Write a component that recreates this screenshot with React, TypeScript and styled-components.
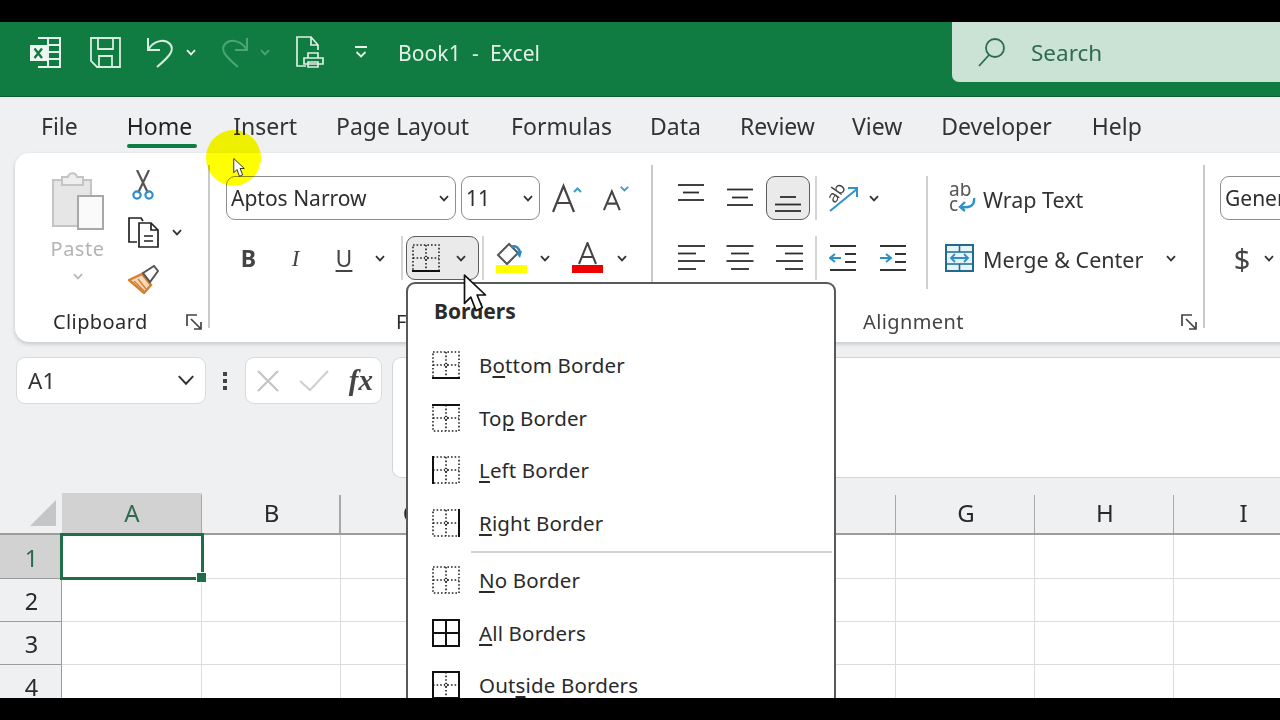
import React from "react";
import styled, { createGlobalStyle } from "styled-components";

const FONT = `"Noto Sans", "Open Sans", "Liberation Sans", sans-serif`;

const Global = createGlobalStyle`
  html, body { margin: 0; padding: 0; background: #000; }
  body { font-family: ${FONT}; width: 1280px; height: 720px; overflow: hidden; }
  #root { width: 1280px; height: 720px; padding: 22px 0; box-sizing: border-box; }
`;

const Frame = styled.div`
  position: relative;
  width: 1280px;
  height: 676px;
  overflow: hidden;
  background: #eef0f2;
  color: #2b2b2b;
`;

/* ---------- title bar ---------- */
const TitleBar = styled.header`
  display: flex;
  align-items: flex-start;
  height: 75px;
  background: #107c41;
  border-bottom: 1px solid #0c5f33;
  box-sizing: border-box;
`;
const Qat = styled.div`
  display: flex;
  align-items: center;
  height: 60px;
  flex: 1;
`;
const QatCell = styled.div<{ $w: number; $ml?: number }>`
  display: flex;
  align-items: center;
  justify-content: center;
  flex: none;
  width: ${(p) => p.$w}px;
  margin-left: ${(p) => p.$ml ?? 0}px;
`;
const DocTitle = styled.div`
  margin-left: 30px;
  padding-top: 2px;
  font-size: 21px;
  color: #e3f1e9;
  white-space: pre;
  letter-spacing: 0.1px;
`;
const SearchBox = styled.div`
  display: flex;
  align-items: center;
  gap: 25px;
  width: 328px;
  height: 60px;
  padding-left: 26px;
  box-sizing: border-box;
  background: #cbe3d5;
  border-bottom-left-radius: 7px;
  font-size: 22.5px;
  color: #2f6b4d;
`;

/* ---------- tabs ---------- */
const TabBar = styled.nav`
  display: flex;
  align-items: flex-start;
  height: 56px;
  padding-left: 41px;
  box-sizing: border-box;
`;
const Tab = styled.div<{ $ml: number; $active?: boolean }>`
  position: relative;
  margin-left: ${(p) => p.$ml}px;
  padding-top: 13px;
  font-size: 23px;
  line-height: 32px;
  color: ${(p) => (p.$active ? "#222" : "#333")};
  white-space: nowrap;
  &::after {
    content: "";
    display: ${(p) => (p.$active ? "block" : "none")};
    position: absolute;
    left: 0;
    right: -5px;
    top: 47px;
    height: 4px;
    border-radius: 2px;
    background: #107c41;
  }
`;

/* ---------- ribbon ---------- */
const Ribbon = styled.section`
  display: flex;
  align-items: flex-start;
  height: 189px;
  margin-left: 15px;
  margin-right: -30px;
  background: #fff;
  border-radius: 14px;
  box-shadow: 0 2px 4px rgba(0, 0, 0, 0.18);
  box-sizing: border-box;
`;
const Group = styled.div<{ $w: number; $last?: boolean }>`
  display: flex;
  flex-direction: column;
  flex: none;
  width: ${(p) => p.$w}px;
  height: 163px;
  margin-top: 12px;
  box-sizing: border-box;
  border-right: ${(p) => (p.$last ? "none" : "2px solid #cacaca")};
`;
const GroupBody = styled.div<{ $pl: number }>`
  display: flex;
  flex-direction: column;
  gap: 16px;
  padding: 11px 0 0 ${(p) => p.$pl}px;
`;
const ClipBody = styled.div`
  display: flex;
  padding: 7px 0 0 23px;
`;
const ToolRow = styled.div`
  display: flex;
  align-items: center;
  height: 44px;
`;
const Cell = styled.div<{ $w: number; $ml?: number }>`
  display: flex;
  align-items: center;
  justify-content: center;
  flex: none;
  width: ${(p) => p.$w}px;
  height: 44px;
  margin-left: ${(p) => p.$ml ?? 0}px;
`;
const Sep = styled.div<{ $ml: number; $mr?: number }>`
  flex: none;
  width: 2px;
  height: 44px;
  margin: 0 ${(p) => p.$mr ?? 0}px 0 ${(p) => p.$ml}px;
  background: #d4d4d4;
`;
const TallSep = styled.div`
  flex: none;
  width: 2px;
  height: 113px;
  background: #d0d0d0;
`;
const SelectBox = styled.div<{ $w: number; $ml?: number }>`
  display: flex;
  align-items: center;
  justify-content: space-between;
  flex: none;
  width: ${(p) => p.$w}px;
  height: 44px;
  margin-left: ${(p) => p.$ml ?? 0}px;
  padding: 0 6px 0 4px;
  box-sizing: border-box;
  border: 1.5px solid #8e8e8e;
  border-radius: 9px;
  font-size: 21px;
  color: #2e2e2e;
  overflow: hidden;
  white-space: nowrap;
`;
const PressedButton = styled.div<{ $w: number; $ml?: number; $gap?: number; $pl?: number }>`
  display: flex;
  align-items: center;
  justify-content: ${(p) => (p.$pl ? "flex-start" : "center")};
  gap: ${(p) => p.$gap ?? 0}px;
  flex: none;
  width: ${(p) => p.$w}px;
  height: 44px;
  margin-left: ${(p) => p.$ml ?? 0}px;
  padding-left: ${(p) => p.$pl ?? 0}px;
  box-sizing: border-box;
  background: #eaeaea;
  border: 1.5px solid #5c5c5c;
  border-radius: 9px;
`;
const StyleGlyph = styled.span<{ $bold?: boolean; $italic?: boolean; $under?: boolean }>`
  font-size: 23px;
  line-height: 1;
  color: #444;
  font-family: ${(p) => (p.$italic ? `"Liberation Serif", serif` : FONT)};
  font-weight: ${(p) => (p.$bold ? 700 : 400)};
  font-style: ${(p) => (p.$italic ? "italic" : "normal")};
  text-decoration: ${(p) => (p.$under ? "underline" : "none")};
  text-underline-offset: 3px;
`;
const CurrencyGlyph = styled.span`
  font-size: 29px;
  line-height: 1;
  color: #444;
`;
const LabelText = styled.div<{ $muted?: boolean }>`
  font-size: 20px;
  line-height: 20px;
  letter-spacing: 0.4px;
  color: ${(p) => (p.$muted ? "#444" : "#2b2b2b")};
`;
const LabelRow = styled.div<{ $pl: number; $pr: number }>`
  display: flex;
  align-items: center;
  justify-content: space-between;
  height: 20px;
  margin-top: auto;
  margin-bottom: -4px;
  padding: 0 ${(p) => p.$pr}px 0 ${(p) => p.$pl}px;
`;
const PasteColumn = styled.div`
  display: flex;
  flex-direction: column;
  align-items: center;
  flex: none;
  width: 80px;
`;
const PasteText = styled.div`
  margin: 6px 0 0 -1px;
  font-size: 20px;
  line-height: 26px;
  letter-spacing: 0.5px;
  color: #b4b4b4;
`;
const ChevronGap = styled.div`
  margin-top: 11px;
  line-height: 0;
`;
const ClipTools = styled.div`
  display: flex;
  flex-direction: column;
  flex: none;
  width: 80px;
  gap: 3px;
  margin-top: -9px;
`;
const ClipTool = styled.div`
  display: flex;
  align-items: center;
  height: 44px;
`;
const ClipIcon = styled.div`
  display: flex;
  justify-content: center;
  flex: none;
  width: 50px;
  margin-right: 4px;
`;
const RibbonLabelText = styled.span<{ $ml: number }>`
  margin-left: ${(p) => p.$ml}px;
  padding-top: 2px;
  font-size: 21.5px;
  color: #333;
  white-space: nowrap;
`;
const WideTool = styled.div<{ $pl: number }>`
  display: flex;
  align-items: center;
  height: 44px;
  padding-left: ${(p) => p.$pl}px;
`;
const WrapColumn = styled.div`
  display: flex;
  flex-direction: column;
  gap: 16px;
`;
const AlignBody = styled.div`
  display: flex;
  padding: 11px 0 0 13px;
`;
const AlignTools = styled.div`
  display: flex;
  flex-direction: column;
  gap: 16px;
  width: 260px;
`;
const CenteredChevron = styled.span<{ $ml: number }>`
  display: inline-flex;
  margin-left: ${(p) => p.$ml}px;
`;

/* ---------- formula row ---------- */
const FormulaRow = styled.section`
  display: flex;
  align-items: flex-start;
  height: 136px;
  padding: 15px 0 0 16px;
  box-sizing: border-box;
`;
const NameBox = styled.div`
  display: flex;
  align-items: center;
  justify-content: space-between;
  flex: none;
  width: 190px;
  height: 47px;
  padding: 0 10px 0 11px;
  box-sizing: border-box;
  background: #fff;
  border: 1.5px solid #dadada;
  border-radius: 9px;
  font-size: 22.5px;
  color: #333;
`;
const Dots = styled.div`
  display: flex;
  flex-direction: column;
  align-items: center;
  justify-content: center;
  gap: 3px;
  flex: none;
  width: 39px;
  height: 47px;
  padding-right: 1px;
  box-sizing: border-box;
`;
const Dot = styled.span`
  width: 4px;
  height: 4px;
  background: #444;
`;
const FxBox = styled.div`
  display: flex;
  align-items: center;
  justify-content: space-between;
  flex: none;
  width: 137px;
  height: 47px;
  padding: 0 8px 0 10px;
  box-sizing: border-box;
  background: #fff;
  border: 1.5px solid #dadada;
  border-radius: 9px;
`;
const FxText = styled.span`
  font-family: "Liberation Serif", serif;
  font-style: italic;
  font-weight: 700;
  font-size: 29px;
  line-height: 1;
  color: #444;
`;
const FormulaInput = styled.div`
  flex: 1;
  height: 121px;
  margin-left: 10px;
  background: #fff;
  border: 1.5px solid #d4d4d4;
  border-right: none;
  border-top-left-radius: 9px;
  border-bottom-left-radius: 9px;
  box-sizing: border-box;
`;

/* ---------- sheet ---------- */
const Sheet = styled.section`
  display: grid;
  grid-template-columns: 62px 140px repeat(8, 138.9px);
  grid-template-rows: 42px 44px 43px 43px 43px;
  margin-top: 15px;
`;
const Corner = styled.div`
  display: flex;
  align-items: flex-end;
  justify-content: flex-end;
  padding: 0 6px 7px 0;
  box-sizing: border-box;
  border-bottom: 2px solid #9c9c9c;
`;
const CornerMark = styled.div`
  width: 0;
  height: 0;
  border-style: solid;
  border-width: 0 0 26px 26px;
  border-color: transparent transparent #c6c6c6 transparent;
`;
const ColHead = styled.div<{ $active?: boolean }>`
  display: flex;
  align-items: center;
  justify-content: center;
  box-sizing: border-box;
  padding-bottom: 2px;
  font-size: 24px;
  background: ${(p) => (p.$active ? "#d2d2d2" : "transparent")};
  color: ${(p) => (p.$active ? "#2c6b4c" : "#2a2a2a")};
  border-bottom: 2px solid #9c9c9c;
  position: relative;
  &::after {
    content: "";
    position: absolute;
    right: 0;
    top: 2px;
    bottom: 0;
    width: 1.5px;
    background: #a8a8a8;
  }
`;
const RowHead = styled.div<{ $active?: boolean }>`
  display: flex;
  align-items: center;
  justify-content: center;
  padding: 2px 0 0 2px;
  box-sizing: border-box;
  font-size: 23.5px;
  background: ${(p) => (p.$active ? "#d2d2d2" : "transparent")};
  color: ${(p) => (p.$active ? "#2c6b4c" : "#2a2a2a")};
  border-right: 1.5px solid #9c9c9c;
  border-bottom: 1.5px solid #9c9c9c;
`;
const SheetCell = styled.div`
  position: relative;
  background: #fff;
  box-sizing: border-box;
  border-right: 1.5px solid #dcdcdc;
  border-bottom: 1.5px solid #dcdcdc;
`;
const Selection = styled.div`
  position: absolute;
  z-index: 2;
  left: -2px;
  top: -2px;
  right: -3px;
  bottom: -2px;
  border: 3px solid #1e6f47;
  box-sizing: border-box;
`;
const Handle = styled.div`
  position: absolute;
  right: -6px;
  bottom: -6px;
  width: 9px;
  height: 9px;
  background: #1e6f47;
  border: 1px solid #fff;
  box-sizing: content-box;
`;

/* ---------- dropdown ---------- */
const Menu = styled.div`
  position: absolute;
  left: 406px;
  top: 260px;
  width: 430px;
  height: 470px;
  box-sizing: border-box;
  background: #fff;
  border: 2px solid #595959;
  border-radius: 9px;
  padding: 14px 0 0 0;
`;
const MenuTitle = styled.div`
  height: 41px;
  padding-left: 26px;
  font-size: 21px;
  line-height: 26px;
  font-weight: 700;
  color: #2b2b2b;
`;
const MenuItem = styled.div`
  display: flex;
  align-items: center;
  gap: 19px;
  height: 52.5px;
  padding-left: 24px;
  font-size: 20.5px;
  color: #2a2a2a;
  letter-spacing: 0.15px;
  u { text-underline-offset: 3px; text-decoration-thickness: 1.5px; }
`;
const MenuDivider = styled.div`
  height: 2px;
  margin: 2px 2px 1px 63px;
  background: #d2d2d2;
`;

/* ---------- screen-recording overlays ---------- */
const Highlight = styled.div`
  position: absolute;
  left: 206px;
  top: 108px;
  width: 55px;
  height: 56px;
  border-radius: 50%;
  background: #ffff00;
  mix-blend-mode: multiply;
`;
const Pointer = styled.svg<{ $x: number; $y: number }>`
  position: absolute;
  left: ${(p) => p.$x}px;
  top: ${(p) => p.$y}px;
`;

/* ---------- icons ---------- */
const Chevron = ({ w = 10, c = "#333" }: { w?: number; c?: string }) => (
  <svg width={w} height={w * 0.7} viewBox="0 0 10 7" fill="none">
    <path d="M1 1.2 5 5.4 9 1.2" stroke={c} strokeWidth={w > 12 ? 1.1 : 1.8} />
  </svg>
);

const ExcelLogo = () => (
  <svg width="31" height="31" viewBox="0 0 31 31" fill="none">
    <path d="M8 1h22v29H8" stroke="#e6f3ec" strokeWidth="2" />
    <path d="M18 1v29M18 8h12M18 15h12M18 22h12" stroke="#e6f3ec" strokeWidth="2" />
    <rect x="0" y="8" width="17" height="16" fill="#eef7f2" />
    <path d="M4.5 11.5 12 21M12 11.5 4.5 21" stroke="#107c41" strokeWidth="2.4" />
  </svg>
);
const SaveIcon = () => (
  <svg width="31" height="31" viewBox="0 0 31 31" fill="none" stroke="#d9ece1" strokeWidth="1.8">
    <path d="M1 1h29v29H7l-6-6z" />
    <path d="M8 1v11h15V1M9 30V19h13v11" />
  </svg>
);
const UndoIcon = ({ c }: { c: string }) => (
  <svg width="29" height="31" viewBox="0 0 29 31" fill="none" stroke={c} strokeWidth="2">
    <path d="M2 1v12h12" />
    <path d="M2 13C7 4 18 1 24 7c5 6 0 12-13 23" />
  </svg>
);
const RedoIcon = ({ c }: { c: string }) => (
  <svg width="29" height="31" viewBox="0 0 29 31" fill="none" stroke={c} strokeWidth="2">
    <path d="M27 1v12H15" />
    <path d="M27 13C22 4 11 1 5 7c-5 6 0 12 13 23" />
  </svg>
);
const PrintIcon = () => (
  <svg width="28" height="32" viewBox="0 0 28 32" fill="none" stroke="#dcefe4" strokeWidth="1.7">
    <path d="M10 30H1V1h14l7 8v5M15 1v8h7" />
    <path d="M12 17h10v5H12zM8 22h19v6H8zM12 26h10v5H12z" fill="#107c41" />
  </svg>
);
const CustomizeIcon = () => (
  <svg width="14" height="14" viewBox="0 0 14 14" fill="none" stroke="#e6f3ec" strokeWidth="1.8">
    <path d="M1 2h12M2.5 7 7 11.5 11.5 7" />
  </svg>
);
const SearchIcon = () => (
  <svg width="28" height="29" viewBox="0 0 28 29" fill="none" stroke="#2f6b4d" strokeWidth="1.8">
    <circle cx="17" cy="10" r="9" />
    <path d="M11 17 1 28" />
  </svg>
);
const ClipboardIcon = () => (
  <svg width="52" height="58" viewBox="0 0 52 58" fill="none">
    <path d="M1 8h38v46H1z" fill="#e6e6e6" stroke="#c4c4c4" strokeWidth="2" />
    <path d="M10 5h6c1-5 8-5 9 0h6v8H10z" fill="#eee" stroke="#c4c4c4" strokeWidth="2" />
    <rect x="26" y="24" width="25" height="33" fill="#fafafa" stroke="#a8a8a8" strokeWidth="2" />
  </svg>
);
const ScissorsIcon = () => (
  <svg width="22" height="30" viewBox="0 0 22 30" fill="none">
    <path d="M5 0l11 23M17 0 6 23" stroke="#555" strokeWidth="2.2" />
    <circle cx="5" cy="25" r="3.6" stroke="#2b8fcb" strokeWidth="2.2" />
    <circle cx="17" cy="25" r="3.6" stroke="#2b8fcb" strokeWidth="2.2" />
  </svg>
);
const CopyIcon = () => (
  <svg width="31" height="31" viewBox="0 0 31 31" fill="none" stroke="#222" strokeWidth="1.7">
    <path d="M9 25H1V1h12l2 3" />
    <path d="M11 6h12l7 7v17H11z" fill="#fff" />
    <path d="M23 6v7h7M16 19h9M16 24h9" />
  </svg>
);
const PainterIcon = () => (
  <svg width="31" height="29" viewBox="0 0 31 29" fill="none">
    <path d="M1 15 14 9l9 11-7 8z" fill="#f7d9bf" stroke="#d97f2c" strokeWidth="2.4" />
    <path d="M6 16l10 10M10 14l8 10" stroke="#d97f2c" strokeWidth="1.4" />
    <path d="M15 8 26 1l4 5-8 11z" fill="#fff" stroke="#555" strokeWidth="2" />
  </svg>
);
const Launcher = () => (
  <svg width="17" height="17" viewBox="0 0 17 17" fill="none" stroke="#444" strokeWidth="1.7">
    <path d="M11 1H1v11" />
    <path d="M5 5l10 10M15 8v7H8" />
  </svg>
);
const GrowA = ({ down }: { down?: boolean }) => (
  <svg width={down ? 28 : 30} height="30" viewBox="0 0 30 30" fill="none">
    <path
      d={down ? "M1 28 9.5 8 18 28M4 21h11" : "M1 29 11.5 3 22 29M5 20h13"}
      stroke="#444"
      strokeWidth="2.2"
    />
    <path
      d={down ? "M19 3l4 4 4-4" : "M22 9l3.5-3.5L29 9"}
      stroke="#3f9ec9"
      strokeWidth="2"
    />
  </svg>
);
const BorderIcon = ({ kind, size = 28 }: { kind: "bottom" | "top" | "left" | "right" | "none" | "all" | "outside"; size?: number }) => {
  const dot = { stroke: "#222", strokeWidth: 1.6, strokeDasharray: "1.6 2" };
  const solid = { stroke: "#111", strokeWidth: 2 };
  return (
    <svg width={size} height={size} viewBox="0 0 28 28" fill="none">
      {kind !== "all" && kind !== "outside" && <rect x="1" y="1" width="26" height="26" {...dot} />}
      {kind !== "all" && <path d="M14 1v26M1 14h26" {...dot} />}
      {kind !== "all" && <circle cx="14" cy="14" r="1.6" stroke="#333" strokeWidth="1" fill="#fff" />}
      {kind === "bottom" && <path d="M0 27h28" {...solid} />}
      {kind === "top" && <path d="M0 1h28" {...solid} />}
      {kind === "left" && <path d="M1 0v28" {...solid} />}
      {kind === "right" && <path d="M27 0v28" {...solid} />}
      {kind === "outside" && <rect x="1" y="1" width="26" height="26" {...solid} />}
      {kind === "all" && <path d="M1 1h26v26H1zM14 1v26M1 14h26" {...solid} />}
    </svg>
  );
};
const FillIcon = () => (
  <svg width="31" height="32" viewBox="0 0 31 32" fill="none">
    <path d="M13 2 2 13l9 9 11-11z" fill="#fff" stroke="#555" strokeWidth="2" />
    <path d="M24 11c-1-6-5-8-9-6" stroke="#2f86c1" strokeWidth="2.6" />
    <path d="M26 9l-2 7-4-5z" fill="#2f86c1" />
    <rect x="0" y="23" width="31" height="8" fill="#ffff00" />
  </svg>
);
const FontColorIcon = () => (
  <svg width="31" height="32" viewBox="0 0 31 32" fill="none">
    <path d="M7 22 15.5 1 24 22M10 15h11" stroke="#444" strokeWidth="2" />
    <rect x="0" y="23" width="31" height="8" fill="#ee0000" />
  </svg>
);
const V_ROWS = { top: [1, 8.5, 16], middle: [5.5, 13.5, 21], bottom: [13, 20.5, 27] };
const AlignVIcon = ({ v }: { v: "top" | "middle" | "bottom" }) => (
  <svg width="28" height="28" viewBox="0 0 28 28" fill="none" stroke="#2c2c2c" strokeWidth="1.8">
    {V_ROWS[v].map((y, i) => {
      const short = v === "bottom" ? i === 0 : i === 1;
      return <path key={y} d={short ? `M6 ${y}h16` : `M1 ${y}h26`} />;
    })}
  </svg>
);
const AlignHIcon = ({ h }: { h: "left" | "center" | "right" }) => (
  <svg width="28" height="28" viewBox="0 0 28 28" fill="none" stroke="#2c2c2c" strokeWidth="1.8">
    {[2, 9.5, 17, 25].map((y, i) => {
      const l = i % 2 === 1 ? 18 : 27;
      const x = h === "left" ? 1 : h === "right" ? 28 - l : (28 - l) / 2;
      return <path key={y} d={`M${x} ${y}h${l}`} />;
    })}
  </svg>
);
const IndentIcon = ({ inc }: { inc?: boolean }) => (
  <svg width="28" height="28" viewBox="0 0 28 28" fill="none">
    <path d="M1 2h26M1 26h26M16 10h11M16 18h11" stroke="#333" strokeWidth="1.8" />
    <path d={inc ? "M1 14h10M7 10l5 4-5 4" : "M12 14H2M6 10l-5 4 5 4"} stroke="#2b8fcb" strokeWidth="2" />
  </svg>
);
const OrientIcon = () => (
  <svg width="31" height="29" viewBox="0 0 31 29" fill="none">
    <text x="0" y="0" fontSize="17" fill="#444" fontFamily="'Noto Sans', sans-serif" transform="translate(7 20) rotate(-55)">ab</text>
    <path d="M2 27 29 5M20 4h9v9" stroke="#2f93c9" strokeWidth="2" />
  </svg>
);
const WrapIcon = () => (
  <svg width="27" height="30" viewBox="0 0 27 30" fill="none">
    <text x="0" y="13" fontSize="19" fill="#555" fontFamily="'Noto Sans', sans-serif">ab</text>
    <text x="0" y="28" fontSize="19" fill="#555" fontFamily="'Noto Sans', sans-serif">c</text>
    <path d="M25 15c1 8-4 10-14 9M16 19l-5 5 5 4" stroke="#2f93c9" strokeWidth="2.4" />
  </svg>
);
const MergeIcon = () => (
  <svg width="29" height="28" viewBox="0 0 29 28" fill="none">
    <rect x="1" y="1" width="27" height="26" fill="#e8f3f9" stroke="#1f6c8f" strokeWidth="2" />
    <path d="M1 8h27M1 20h27M14.5 1v7M14.5 20v7" stroke="#1f6c8f" strokeWidth="1.6" />
    <path d="M6 14h17M10 10l-4 4 4 4M19 10l4 4-4 4" stroke="#2b8fcb" strokeWidth="1.8" />
  </svg>
);

const Cancel = () => (
  <svg width="24" height="24" viewBox="0 0 24 24" fill="none" stroke="#c4c4c4" strokeWidth="2.2">
    <path d="M2 2l20 20M22 2 2 22" />
  </svg>
);
const Enter = () => (
  <svg width="32" height="24" viewBox="0 0 32 24" fill="none" stroke="#cfcfcf" strokeWidth="2">
    <path d="M2 12l10 9L30 2" />
  </svg>
);

const Arrow = ({ x, y, w, h }: { x: number; y: number; w: number; h: number }) => (
  <Pointer $x={x} $y={y} width={w} height={h} viewBox="0 0 22 40" fill="none">
    <path
      d="M1 1v27l6-6 5 13 6-3-5-12h8z"
      fill="#fff"
      stroke="#111"
      strokeWidth="1.6"
      strokeLinejoin="round"
    />
  </Pointer>
);

const TABS: [string, number, boolean?][] = [
  ["File", 0],
  ["Home", 49, true],
  ["Insert", 41],
  ["Page Layout", 39],
  ["Formulas", 42],
  ["Data", 38],
  ["Review", 39],
  ["View", 37],
  ["Developer", 39],
  ["Help", 40],
];
const COLS = ["A", "B", "C", "D", "E", "F", "G", "H", "I"];
const ROWS = [1, 2, 3, 4];

export default function App() {
  return (
    <>
      <Global />
      <Frame>
        <TitleBar>
          <Qat>
            <QatCell $w={31} $ml={30}><ExcelLogo /></QatCell>
            <QatCell $w={31} $ml={29}><SaveIcon /></QatCell>
            <QatCell $w={29} $ml={25}><UndoIcon c="#d9ece1" /></QatCell>
            <QatCell $w={12} $ml={10}><Chevron c="#e6f3ec" /></QatCell>
            <QatCell $w={29} $ml={23}><RedoIcon c="#4ba577" /></QatCell>
            <QatCell $w={12} $ml={10}><Chevron c="#4ba577" /></QatCell>
            <QatCell $w={28} $ml={25}><PrintIcon /></QatCell>
            <QatCell $w={14} $ml={30}><CustomizeIcon /></QatCell>
            <DocTitle>Book1  -  Excel</DocTitle>
          </Qat>
          <SearchBox>
            <SearchIcon />
            <span>Search</span>
          </SearchBox>
        </TitleBar>

        <TabBar>
          {TABS.map(([name, ml, active]) => (
            <Tab key={name} $ml={ml} $active={active}>{name}</Tab>
          ))}
        </TabBar>

        <Ribbon>
          <Group $w={195}>
            <ClipBody>
              <PasteColumn>
                <ClipboardIcon />
                <PasteText>Paste</PasteText>
                <ChevronGap><Chevron c="#b8b8b8" /></ChevronGap>
              </PasteColumn>
              <ClipTools>
                <ClipTool><ClipIcon><ScissorsIcon /></ClipIcon></ClipTool>
                <ClipTool>
                  <ClipIcon><CopyIcon /></ClipIcon>
                  <Chevron />
                </ClipTool>
                <ClipTool><ClipIcon><PainterIcon /></ClipIcon></ClipTool>
              </ClipTools>
            </ClipBody>
            <LabelRow $pl={38} $pr={5}>
              <LabelText>Clipboard</LabelText>
              <Launcher />
            </LabelRow>
          </Group>

          <Group $w={443}>
            <GroupBody $pl={16}>
              <ToolRow>
                <SelectBox $w={230}>Aptos Narrow<Chevron /></SelectBox>
                <SelectBox $w={79} $ml={5}>11<Chevron /></SelectBox>
                <Cell $w={54}><GrowA /></Cell>
                <Cell $w={46}><GrowA down /></Cell>
              </ToolRow>
              <ToolRow>
                <Cell $w={45}><StyleGlyph $bold>B</StyleGlyph></Cell>
                <Cell $w={49}><StyleGlyph $italic>I</StyleGlyph></Cell>
                <Cell $w={48}><StyleGlyph $under>U</StyleGlyph></Cell>
                <Cell $w={24}><Chevron /></Cell>
                <Sep $ml={9} $mr={3} />
                <PressedButton $w={73} $gap={16} $pl={5}>
                  <BorderIcon kind="bottom" />
                  <Chevron />
                </PressedButton>
                <Sep $ml={3} />
                <Cell $w={54}><FillIcon /></Cell>
                <Cell $w={14}><Chevron /></Cell>
                <Cell $w={71}><FontColorIcon /></Cell>
                <Cell $w={14} $ml={-8}><Chevron /></Cell>
              </ToolRow>
            </GroupBody>
            <LabelRow $pl={186} $pr={6}>
              <LabelText>Font</LabelText>
              <Launcher />
            </LabelRow>
          </Group>

          <Group $w={552}>
            <AlignBody>
              <AlignTools>
                <ToolRow>
                  <Cell $w={49}><AlignVIcon v="top" /></Cell>
                  <Cell $w={49}><AlignVIcon v="middle" /></Cell>
                  <PressedButton $w={44} $ml={2}><AlignVIcon v="bottom" /></PressedButton>
                  <Sep $ml={5} />
                  <Cell $w={52}><OrientIcon /></Cell>
                  <CenteredChevron $ml={0}><Chevron /></CenteredChevron>
                </ToolRow>
                <ToolRow>
                  <Cell $w={49}><AlignHIcon h="left" /></Cell>
                  <Cell $w={49}><AlignHIcon h="center" /></Cell>
                  <Cell $w={49}><AlignHIcon h="right" /></Cell>
                  <Sep $ml={2} />
                  <Cell $w={52}><IndentIcon /></Cell>
                  <Cell $w={48}><IndentIcon inc /></Cell>
                </ToolRow>
              </AlignTools>
              <TallSep />
              <WrapColumn>
                <WideTool $pl={21}><WrapIcon /><RibbonLabelText $ml={7}>Wrap Text</RibbonLabelText></WideTool>
                <WideTool $pl={17}>
                  <MergeIcon />
                  <RibbonLabelText $ml={9}>Merge &amp; Center</RibbonLabelText>
                  <CenteredChevron $ml={23}><Chevron /></CenteredChevron>
                </WideTool>
              </WrapColumn>
            </AlignBody>
            <LabelRow $pl={210} $pr={5}>
              <LabelText $muted>Alignment</LabelText>
              <Launcher />
            </LabelRow>
          </Group>

          <Group $w={110} $last>
            <GroupBody $pl={15}>
              <SelectBox $w={100}>General</SelectBox>
              <ToolRow>
                <Cell $w={44}><CurrencyGlyph>$</CurrencyGlyph></Cell>
                <Chevron />
              </ToolRow>
            </GroupBody>
          </Group>
        </Ribbon>

        <FormulaRow>
          <NameBox>A1<Chevron w={18} /></NameBox>
          <Dots><Dot /><Dot /><Dot /></Dots>
          <FxBox><Cancel /><Enter /><FxText>fx</FxText></FxBox>
          <FormulaInput />
        </FormulaRow>

        <Sheet>
          <Corner><CornerMark /></Corner>
          {COLS.map((c, i) => <ColHead key={c} $active={i === 0}>{c}</ColHead>)}
          {ROWS.map((r) => (
            <React.Fragment key={r}>
              <RowHead $active={r === 1}>{r}</RowHead>
              {COLS.map((c, i) => (
                <SheetCell key={c}>
                  {r === 1 && i === 0 && <Selection><Handle /></Selection>}
                </SheetCell>
              ))}
            </React.Fragment>
          ))}
        </Sheet>

        <Highlight />
        <Arrow x={233} y={136} w={12} h={21} />

        <Menu>
          <MenuTitle>Borders</MenuTitle>
          <MenuItem><BorderIcon kind="bottom" /><span>B<u>o</u>ttom Border</span></MenuItem>
          <MenuItem><BorderIcon kind="top" /><span>To<u>p</u> Border</span></MenuItem>
          <MenuItem><BorderIcon kind="left" /><span><u>L</u>eft Border</span></MenuItem>
          <MenuItem><BorderIcon kind="right" /><span><u>R</u>ight Border</span></MenuItem>
          <MenuDivider />
          <MenuItem><BorderIcon kind="none" /><span><u>N</u>o Border</span></MenuItem>
          <MenuItem><BorderIcon kind="all" /><span><u>A</u>ll Borders</span></MenuItem>
          <MenuItem><BorderIcon kind="outside" /><span>Out<u>s</u>ide Borders</span></MenuItem>
        </Menu>
        <Arrow x={463} y={252} w={24} h={42} />
      </Frame>
    </>
  );
}
